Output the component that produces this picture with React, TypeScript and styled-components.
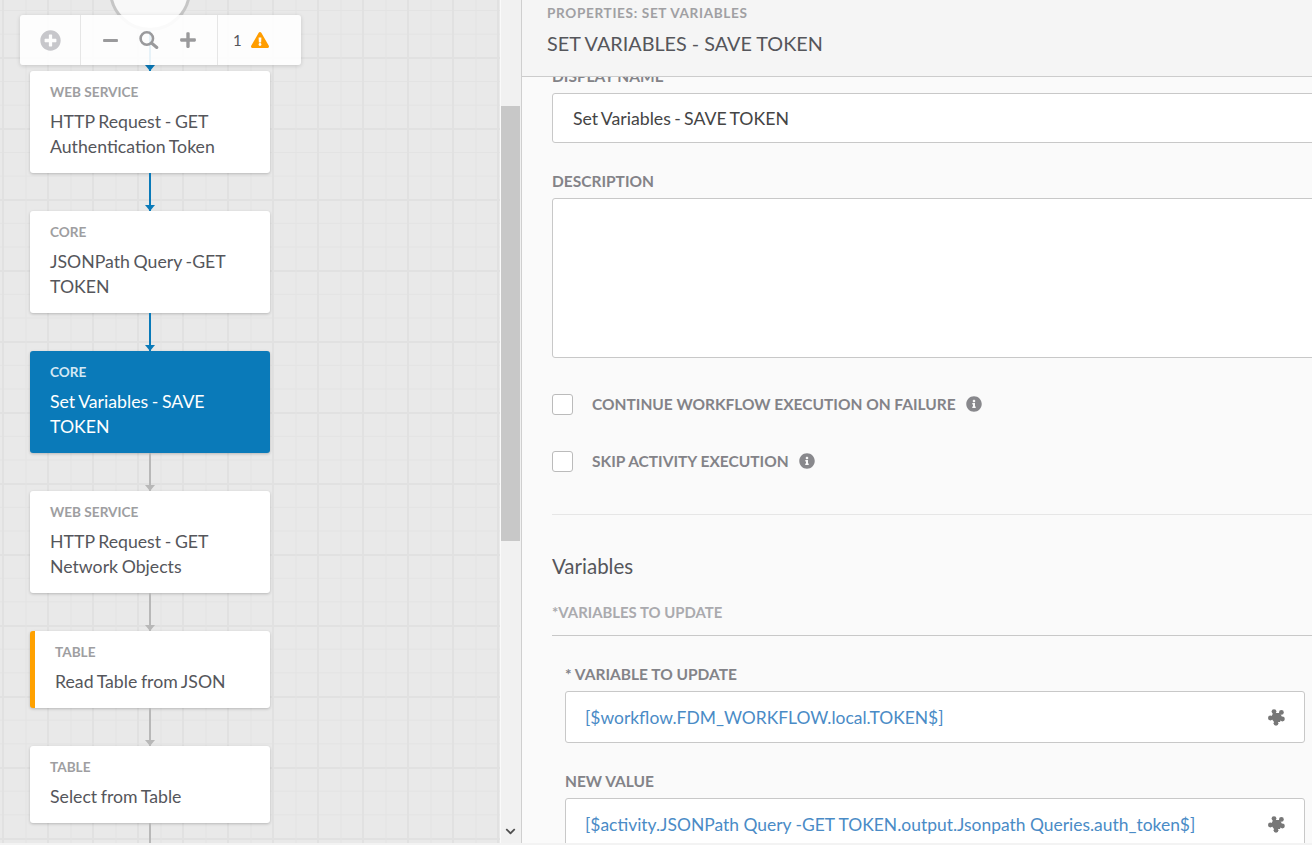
import styled, { createGlobalStyle } from "styled-components";
import {
  FaChevronDown,
  FaExclamationTriangle,
  FaInfoCircle,
  FaMinus,
  FaPlus,
  FaPlusCircle,
} from "react-icons/fa";

const GlobalStyle = createGlobalStyle`
  html, body {
    margin: 0;
    height: 100%;
    overflow: hidden;
  }
  body {
    font-family: Lato, "Open Sans", sans-serif;
    background: #f3f3f3;
  }
  * {
    box-sizing: border-box;
  }
`;

const Page = styled.div`
  width: 1312px;
  height: 843px;
  display: flex;
  overflow: hidden;
`;

const Canvas = styled.div`
  position: relative;
  width: 500px;
  height: 843px;
  overflow: hidden;
  background-color: #e9e9e9;
  background-image:
    linear-gradient(to right, #e1e1e1 2px, transparent 2px),
    linear-gradient(to right, #e3e3e3 1px, transparent 1px),
    linear-gradient(to bottom, #e1e1e1 2px, transparent 2px),
    linear-gradient(to bottom, #e3e3e3 1px, transparent 1px);
  background-size: 45px 100%, 22.5px 100%, 100% 71px, 100% 23.67px;
  background-position: 2px 0, 3px 0, 0 57px, 0 10px;
`;

const Flow = styled.div`
  width: 240px;
  margin: -51px 0 0 30px;
  display: flex;
  flex-direction: column;
  align-items: center;
`;

const StartNode = styled.div`
  width: 82px;
  height: 82px;
  flex-shrink: 0;
  border-radius: 50%;
  border: 3px solid #c6c6c6;
  background: #f8f8f8;
`;

const Connector = styled.div<{ $done?: boolean; $height?: number }>`
  position: relative;
  flex-shrink: 0;
  width: 2px;
  height: ${(p) => p.$height ?? 38}px;
  background: ${(p) => (p.$done ? "#0a7ab9" : "#b8b8b8")};

  &::after {
    content: "";
    position: absolute;
    left: -4px;
    bottom: 0;
    border-left: 5px solid transparent;
    border-right: 5px solid transparent;
    border-top: 6px solid ${(p) => (p.$done ? "#0a7ab9" : "#b8b8b8")};
  }
`;

const Tail = styled.div`
  flex-shrink: 0;
  width: 2px;
  height: 30px;
  background: #b8b8b8;
`;

const Card = styled.div<{ $active?: boolean; $warning?: boolean }>`
  width: 240px;
  flex-shrink: 0;
  padding: 13px 20px 14.5px;
  border-radius: 3px;
  border-left: ${(p) => (p.$warning ? "5px solid #ffa100" : "0 none")};
  background: ${(p) => (p.$active ? "#0a7ab9" : "#fff")};
  box-shadow: 0 1px 3px rgba(0, 0, 0, 0.22);
`;

const CardType = styled.div<{ $active?: boolean }>`
  height: 16px;
  margin-bottom: 8.5px;
  font-size: 13.6px;
  line-height: 16px;
  font-weight: 700;
  color: ${(p) => (p.$active ? "#d4e8f4" : "#9e9ea1")};
`;

const CardTitle = styled.div<{ $active?: boolean }>`
  font-size: 17.7px;
  line-height: 25px;
  word-spacing: -0.9px;
  color: ${(p) => (p.$active ? "#fff" : "#55565b")};
`;

const Toolbar = styled.div`
  position: absolute;
  left: 20px;
  top: 15px;
  width: 281px;
  height: 50px;
  display: flex;
  align-items: center;
  border-radius: 3px;
  background: rgba(255, 255, 255, 0.9);
  box-shadow: 0 1px 4px rgba(0, 0, 0, 0.15);
`;

const ToolGroup = styled.div<{ $width: number; $divider?: boolean }>`
  width: ${(p) => p.$width}px;
  height: 100%;
  display: flex;
  align-items: center;
  justify-content: center;
  border-right: ${(p) => (p.$divider ? "1px solid #e6e6e6" : "0 none")};
`;

const ZoomGroup = styled(ToolGroup)`
  gap: 20px;
  color: #9a9a9c;
`;

const WarningGroup = styled(ToolGroup)`
  justify-content: flex-start;
  gap: 9px;
  padding-left: 15px;
  font-size: 15px;
  color: #55565b;
`;

const AddIcon = styled(FaPlusCircle)`
  font-size: 21px;
  color: #c7c7cb;
`;

const WarnIcon = styled(FaExclamationTriangle)`
  font-size: 18px;
  color: #ff9d00;
`;

const ScrollTrack = styled.div`
  position: relative;
  width: 21px;
  height: 843px;
  flex-shrink: 0;
  background: #f1f1f1;
  border-left: 1px solid #fafafa;
`;

const ScrollThumb = styled.div`
  position: absolute;
  top: 106px;
  left: 0;
  width: 19px;
  height: 435px;
  background: #c8c8c8;
`;

const ScrollArrow = styled(FaChevronDown)`
  position: absolute;
  left: 4px;
  top: 826px;
  font-size: 11px;
  color: #505050;
`;

const Panel = styled.div`
  width: 791px;
  height: 843px;
  flex-shrink: 0;
  display: flex;
  flex-direction: column;
  overflow: hidden;
  background: #fafafa;
  border-left: 1px solid #cfcfcf;
`;

const PanelHeader = styled.div`
  position: relative;
  z-index: 1;
  height: 77px;
  flex-shrink: 0;
  padding: 5px 0 0 25px;
  background: #f5f5f5;
  border-bottom: 1px solid #cccccc;
`;

const PanelKicker = styled.div`
  font-size: 13.6px;
  line-height: 16px;
  font-weight: 700;
  letter-spacing: 0.65px;
  color: #a0a0a3;
`;

const PanelTitle = styled.div`
  margin-top: 10px;
  font-size: 19.8px;
  line-height: 24px;
  color: #55565b;
`;

const Form = styled.div`
  width: 810px;
  margin-top: -11px;
  padding-left: 30px;
  display: flex;
  flex-direction: column;
`;

const FieldLabel = styled.div`
  height: 20px;
  font-size: 15.5px;
  line-height: 20px;
  font-weight: 700;
  color: #838388;
`;

const TextInput = styled.div`
  height: 50px;
  margin-top: 7px;
  padding-left: 20px;
  display: flex;
  align-items: center;
  font-size: 17.7px;
  word-spacing: -1.2px;
  color: #444;
  background: #fff;
  border: 1px solid #c8c8c8;
  border-radius: 3px;
`;

const DescriptionLabel = styled(FieldLabel)`
  margin-top: 28px;
`;

const TextArea = styled.div`
  height: 160px;
  margin-top: 7px;
  background: #fff;
  border: 1px solid #c8c8c8;
  border-radius: 3px;
`;

const CheckRow = styled.div<{ $top: number }>`
  display: flex;
  align-items: center;
  height: 20px;
  margin-top: ${(p) => p.$top}px;
`;

const CheckBox = styled.div`
  width: 21px;
  height: 21px;
  margin-right: 19px;
  background: #fff;
  border: 1px solid #bbb;
  border-radius: 3px;
`;

const InfoIcon = styled(FaInfoCircle)`
  margin-left: 10px;
  font-size: 16px;
  color: #88888c;
`;

const Divider = styled.div`
  height: 1px;
  width: 780px;
  margin-top: 43px;
  background: #e6e6e6;
`;

const SectionTitle = styled.div`
  margin-top: 39px;
  font-size: 20.5px;
  line-height: 24px;
  color: #55565b;
`;

const SubLabel = styled.div`
  height: 33px;
  margin-top: 24px;
  font-size: 14.9px;
  line-height: 20px;
  font-weight: 700;
  color: #aaaaae;
`;

const SubRule = styled.div`
  width: 780px;
  height: 1px;
  background: #c8c8c8;
`;

const Nested = styled.div`
  width: 740px;
  margin-left: 13px;
  padding-top: 28px;
  display: flex;
  flex-direction: column;
`;

const VariableInput = styled.div`
  height: 52px;
  margin-top: 7px;
  padding: 0 19px 0 19px;
  display: flex;
  align-items: center;
  justify-content: space-between;
  flex-shrink: 0;
  font-size: 17.45px;
  color: #4a8bc6;
  background: #fff;
  border: 1px solid #c8c8c8;
  border-radius: 3px;
`;

const NewValueLabel = styled(FieldLabel)`
  margin-top: 28px;
`;

interface IStep {
  type: string;
  title: string[];
  active?: boolean;
  warning?: boolean;
  done?: boolean;
}

const steps: IStep[] = [
  { type: "WEB SERVICE", title: ["HTTP Request - GET", "Authentication Token"], done: true },
  { type: "CORE", title: ["JSONPath Query -GET", "TOKEN"], done: true },
  { type: "CORE", title: ["Set Variables - SAVE", "TOKEN"], active: true },
  { type: "WEB SERVICE", title: ["HTTP Request - GET", "Network Objects"] },
  { type: "TABLE", title: ["Read Table from JSON"], warning: true },
  { type: "TABLE", title: ["Select from Table"] },
];

function SearchGlyph() {
  return (
    <svg width="20" height="18" viewBox="0 0 20 18" fill="none" stroke="currentColor">
      <circle cx="7.8" cy="7.5" r="6.2" strokeWidth="2.6" />
      <path d="M12.5 12 L17.8 16.5" strokeWidth="3" strokeLinecap="round" />
    </svg>
  );
}

function PuzzleGlyph() {
  return (
    <svg width="17" height="17" viewBox="0 0 17 17" fill="#777">
      <path d="M5 4 L12 4 L14 8 L12 13 L6 13 L3 9 Z" />
      <circle cx="6" cy="2.6" r="2.4" />
      <circle cx="13.4" cy="3.4" r="2.4" />
      <circle cx="2.4" cy="9" r="2.4" />
      <circle cx="8" cy="14.3" r="2.4" />
      <circle cx="14.4" cy="10" r="2.4" />
    </svg>
  );
}

function App() {
  return (
    <Page>
      <GlobalStyle />
      <Canvas>
        <Flow>
          <StartNode />
          <Connector $done $height={40} />
          {steps.map((step, i) => (
            <StepItem key={step.title[0] + i} step={step} last={i === steps.length - 1} />
          ))}
        </Flow>
        <Toolbar>
          <ToolGroup $width={61} $divider>
            <AddIcon />
          </ToolGroup>
          <ZoomGroup $width={137} $divider>
            <FaMinus size={17} />
            <SearchGlyph />
            <FaPlus size={18} />
          </ZoomGroup>
          <WarningGroup $width={83}>
            1
            <WarnIcon />
          </WarningGroup>
        </Toolbar>
      </Canvas>
      <ScrollTrack>
        <ScrollThumb />
        <ScrollArrow />
      </ScrollTrack>
      <Panel>
        <PanelHeader>
          <PanelKicker>PROPERTIES: SET VARIABLES</PanelKicker>
          <PanelTitle>SET VARIABLES - SAVE TOKEN</PanelTitle>
        </PanelHeader>
        <Form>
          <FieldLabel>DISPLAY NAME</FieldLabel>
          <TextInput>Set Variables - SAVE TOKEN</TextInput>
          <DescriptionLabel>DESCRIPTION</DescriptionLabel>
          <TextArea />
          <CheckRow $top={36}>
            <CheckBox />
            <FieldLabel>CONTINUE WORKFLOW EXECUTION ON FAILURE</FieldLabel>
            <InfoIcon />
          </CheckRow>
          <CheckRow $top={37}>
            <CheckBox />
            <FieldLabel>SKIP ACTIVITY EXECUTION</FieldLabel>
            <InfoIcon />
          </CheckRow>
          <Divider />
          <SectionTitle>Variables</SectionTitle>
          <SubLabel>*VARIABLES TO UPDATE</SubLabel>
          <SubRule />
          <Nested>
            <FieldLabel>* VARIABLE TO UPDATE</FieldLabel>
            <VariableInput>
              [$workflow.FDM_WORKFLOW.local.TOKEN$]
              <PuzzleGlyph />
            </VariableInput>
            <NewValueLabel>NEW VALUE</NewValueLabel>
            <VariableInput>
              [$activity.JSONPath Query -GET TOKEN.output.Jsonpath Queries.auth_token$]
              <PuzzleGlyph />
            </VariableInput>
          </Nested>
        </Form>
      </Panel>
    </Page>
  );
}

function StepItem({ step, last }: { step: IStep; last: boolean }) {
  return (
    <>
      <Card $active={step.active} $warning={step.warning}>
        <CardType $active={step.active}>{step.type}</CardType>
        <CardTitle $active={step.active}>
          {step.title.map((line) => (
            <div key={line}>{line}</div>
          ))}
        </CardTitle>
      </Card>
      {last ? <Tail /> : <Connector $done={step.done} />}
    </>
  );
}

export default App;
